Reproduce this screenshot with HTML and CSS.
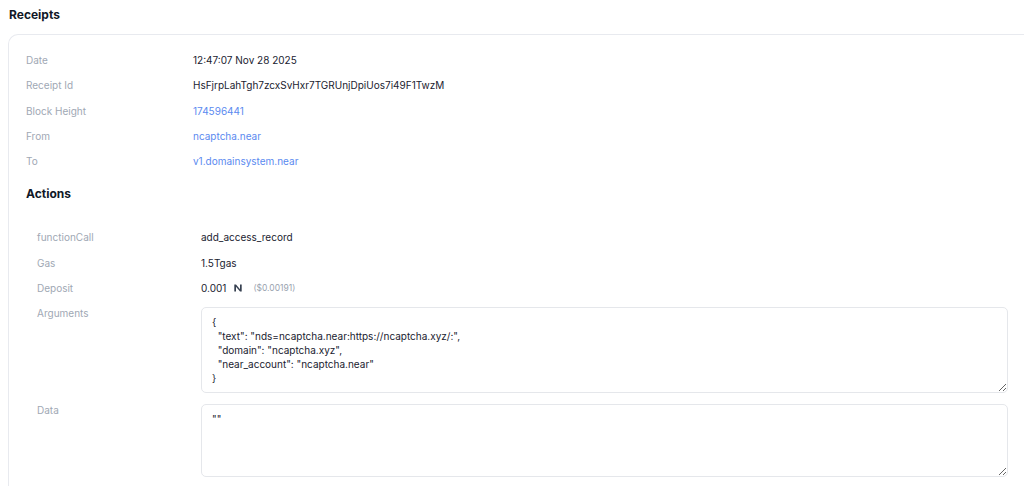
FILE: index.html
```html
<!DOCTYPE html>
<html>
<head>
<meta charset="utf-8">
<link rel="stylesheet" href="styles.css">
</head>
<body>
<h2 class="page-title">Receipts</h2>
<div class="card">
  <div class="rows">
    <div class="row"><span class="label">Date</span><span class="value">12:47:07 Nov 28 2025</span></div>
    <div class="row"><span class="label">Receipt Id</span><span class="value">HsFjrpLahTgh7zcxSvHxr7TGRUnjDpiUos7i49F1TwzM</span></div>
    <div class="row"><span class="label">Block Height</span><span class="value link">174596441</span></div>
    <div class="row"><span class="label">From</span><span class="value link">ncaptcha.near</span></div>
    <div class="row"><span class="label">To</span><span class="value link">v1.domainsystem.near</span></div>
  </div>
  <h3 class="section-title">Actions</h3>
  <div class="actions">
    <div class="row"><span class="label">functionCall</span><span class="value">add_access_record</span></div>
    <div class="row"><span class="label">Gas</span><span class="value">1.5Tgas</span></div>
    <div class="row"><span class="label">Deposit</span><span class="value deposit">0.001<svg class="near-sign" viewBox="0 0 10 8" width="10" height="8"><path d="M1.3 7.6V0.4H3L7 5.3V0.4H8.7V7.6H7L3 2.7V7.6Z" fill="#374151"/></svg><span class="usd">($0.00191)</span></span></div>
    <div class="row row-box"><span class="label">Arguments</span><textarea class="box box-args" readonly>{
  "text": "nds=ncaptcha.near:https://ncaptcha.xyz/:",
  "domain": "ncaptcha.xyz",
  "near_account": "ncaptcha.near"
}</textarea></div>
    <div class="row row-box last"><span class="label">Data</span><textarea class="box box-data" readonly>""</textarea></div>
  </div>
</div>
</body>
</html>
```

FILE: styles.css
```css
html, body {
  margin: 0;
  padding: 0;
  background: #ffffff;
  font-family: Inter, "Liberation Sans", sans-serif;
  color: #1f2937;
  height: 487px;
  overflow: hidden;
}

.page-title {
  margin: 0;
  padding: 7px 0 0 9px;
  font-size: 12px;
  font-weight: 700;
  color: #111827;
  line-height: 16px;
}

.card {
  margin: 11px 0 0 8px;
  border: 1px solid #e8eaef;
  border-right: none;
  border-bottom: none;
  border-radius: 10px 0 0 0;
  padding: 18px 0 0 17px;
  height: 452px;
  box-sizing: border-box;
  overflow: hidden;
}

.row {
  display: grid;
  grid-template-columns: 167px 1fr;
  height: 25.3px;
  align-items: start;
  font-size: 10px;
  line-height: 14px;
}

.label {
  color: #a0a8b4;
}

.value {
  color: #1a2230;
}

.link {
  color: #5b8af0;
}

.section-title {
  margin: 7px 0 0 0;
  font-size: 12px;
  font-weight: 700;
  color: #111827;
  line-height: 16px;
  height: 44px;
}

.actions {
  padding-left: 11px;
}

.actions .row {
  grid-template-columns: 164px 1fr;
}

.deposit {
  display: flex;
  align-items: center;
}

.near-sign {
  margin: 0 10px 0 7px;
}

.usd {
  font-size: 8.5px;
  color: #9aa3af;
}

.row-box {
  height: auto;
  margin-bottom: 10px;
}

.row-box.last {
  margin-bottom: 0;
}

.box {
  margin: 1px 16px 0 0;
  border: 1px solid #e5e7eb;
  border-radius: 5px;
  padding: 7px 10px;
  font-family: Inter, "Liberation Sans", sans-serif;
  font-size: 10px;
  line-height: 14px;
  color: #1a2230;
  background: #ffffff;
  outline: none;
  box-sizing: border-box;
}

.box-args {
  height: 86px;
}

.box-data {
  height: 73px;
}
```
